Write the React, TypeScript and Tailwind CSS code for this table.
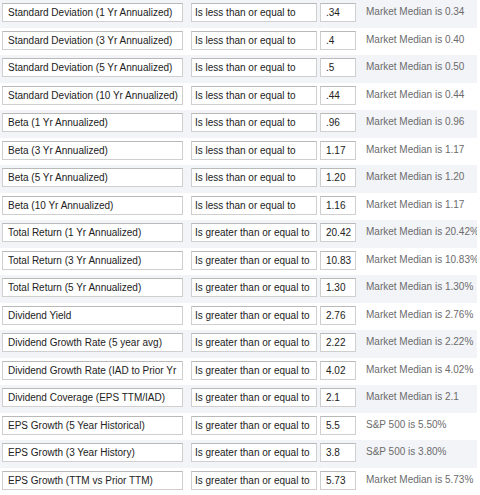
import React from "react";

type Criterion = {
  label: string;
  op: string;
  value: string;
  note: string;
};

const LESS = "Is less than or equal to";
const MORE = "Is greater than or equal to";

const criteria: Criterion[] = [
  { label: "Standard Deviation (1 Yr Annualized)", op: LESS, value: ".34", note: "Market Median is 0.34" },
  { label: "Standard Deviation (3 Yr Annualized)", op: LESS, value: ".4", note: "Market Median is 0.40" },
  { label: "Standard Deviation (5 Yr Annualized)", op: LESS, value: ".5", note: "Market Median is 0.50" },
  { label: "Standard Deviation (10 Yr Annualized)", op: LESS, value: ".44", note: "Market Median is 0.44" },
  { label: "Beta (1 Yr Annualized)", op: LESS, value: ".96", note: "Market Median is 0.96" },
  { label: "Beta (3 Yr Annualized)", op: LESS, value: "1.17", note: "Market Median is 1.17" },
  { label: "Beta (5 Yr Annualized)", op: LESS, value: "1.20", note: "Market Median is 1.20" },
  { label: "Beta (10 Yr Annualized)", op: LESS, value: "1.16", note: "Market Median is 1.17" },
  { label: "Total Return (1 Yr Annualized)", op: MORE, value: "20.42", note: "Market Median is 20.42%" },
  { label: "Total Return (3 Yr Annualized)", op: MORE, value: "10.83", note: "Market Median is 10.83%" },
  { label: "Total Return (5 Yr Annualized)", op: MORE, value: "1.30", note: "Market Median is 1.30%" },
  { label: "Dividend Yield", op: MORE, value: "2.76", note: "Market Median is 2.76%" },
  { label: "Dividend Growth Rate (5 year avg)", op: MORE, value: "2.22", note: "Market Median is 2.22%" },
  { label: "Dividend Growth Rate (IAD to Prior Yr", op: MORE, value: "4.02", note: "Market Median is 4.02%" },
  { label: "Dividend Coverage (EPS TTM/IAD)", op: MORE, value: "2.1", note: "Market Median is 2.1" },
  { label: "EPS Growth (5 Year Historical)", op: MORE, value: "5.5", note: "S&P 500 is 5.50%" },
  { label: "EPS Growth (3 Year History)", op: MORE, value: "3.8", note: "S&P 500 is 3.80%" },
  { label: "EPS Growth (TTM vs Prior TTM)", op: MORE, value: "5.73", note: "Market Median is 5.73%" },
];

const boxClass =
  "flex h-[19px] shrink-0 items-center overflow-hidden whitespace-nowrap border border-[#cfcfcf] border-t-[#b9b9b9] bg-white text-[10px] text-[#222]";

function CriterionRow({ row, index }: { row: Criterion; index: number }) {
  return (
    <div
      className={
        index % 2 === 0
          ? "flex h-[27.5px] items-start overflow-hidden bg-[#f3f4f8] pt-[3px]"
          : "flex h-[27.5px] items-start overflow-hidden bg-white pt-[3px]"
      }
    >
      <div className={`${boxClass} ml-[2px] w-[181px] pl-[5px]`}>{row.label}</div>
      <div className={`${boxClass} ml-[8px] w-[126px] pl-[3px]`}>{row.op}</div>
      <div className={`${boxClass} ml-[3px] w-[36px] pl-[5px]`}>{row.value}</div>
      <div className="ml-[10px] flex h-[17px] shrink-0 items-center whitespace-nowrap text-[10px] text-[#6b6b6b]">
        {row.note}
      </div>
    </div>
  );
}

export default function App() {
  return (
    <div className="h-[495px] w-[480px] overflow-hidden bg-white font-['Liberation_Sans',Arial,sans-serif]">
      <div className="w-[477px] overflow-hidden">
        {criteria.map((row, i) => (
          <CriterionRow key={row.label} row={row} index={i} />
        ))}
      </div>
    </div>
  );
}
